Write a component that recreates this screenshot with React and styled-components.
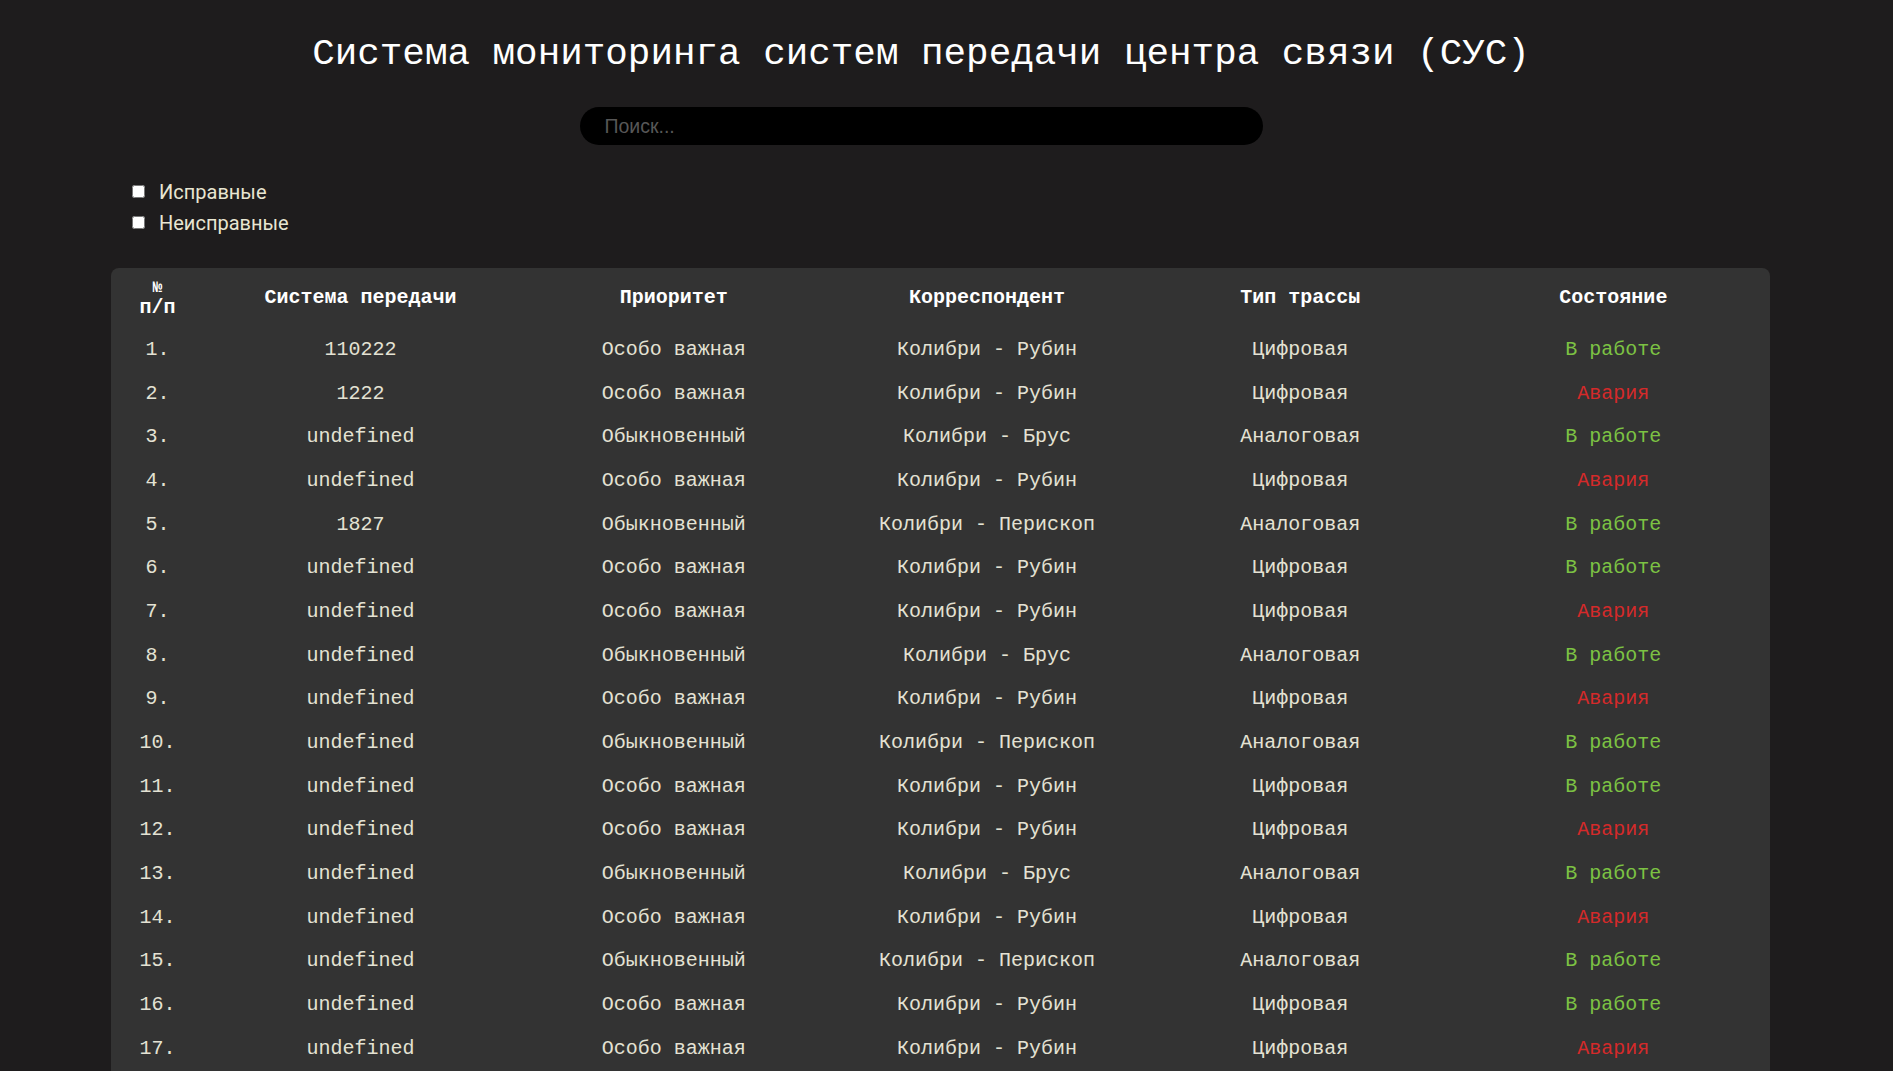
import React from 'react';
import styled, { createGlobalStyle } from 'styled-components';

const GlobalStyle = createGlobalStyle`
html, body {
  margin: 0;
  padding: 0;
  height: 100%;
  overflow: hidden;
  background: #1e1c1d;
}
`;

const Page = styled.div`
min-height: 100vh;
font-family: "Liberation Mono", "DejaVu Sans Mono", monospace;
`;

const Top = styled.div`
padding: 32px 51px 0 0;
display: flex;
flex-direction: column;
align-items: center;
`;

const Title = styled.h1`
margin: 0;
font-size: 37.6px;
line-height: 44px;
font-weight: 400;
color: #fff;
white-space: nowrap;
`;

const Search = styled.input`
margin-top: 31px;
width: 683px;
height: 38px;
box-sizing: border-box;
border: none;
outline: none;
border-radius: 19px;
background: #000;
color: #ddd;
padding: 0 0 0 25px;
font-family: "Liberation Sans", Arial, sans-serif;
font-size: 19.5px;
&::placeholder {
  color: #575757;
}
`;

const Filters = styled.div`
margin-top: 31px;
padding-left: 132px;
display: flex;
flex-direction: column;
`;

const FilterRow = styled.label`
height: 31px;
display: flex;
align-items: center;
gap: 14px;
font-family: Roboto, "Noto Sans", sans-serif;
font-size: 20px;
color: #e8e6d2;
`;

const Check = styled.input`
margin: 0;
width: 13px;
height: 13px;
`;

const Panel = styled.div`
margin: 30px 0 0 111px;
width: 1659px;
padding-bottom: 12px;
background: #333;
border-radius: 8px;
overflow: hidden;
`;

const Table = styled.table`
width: 100%;
table-layout: fixed;
border-collapse: collapse;
font-size: 20px;
`;

const Head = styled.th`
width: ${p => p.$w || 'auto'};
height: 58px;
box-sizing: border-box;
padding: 9px 0 11px;
vertical-align: middle;
font-weight: 700;
line-height: 19px;
color: #fff;
text-align: center;
`;

const Small = styled.span`
font-size: 16px;
`;

const Cell = styled.td`
height: 43.7px;
padding: 0;
text-align: center;
vertical-align: middle;
line-height: 26px;
white-space: nowrap;
color: ${p => p.$color || '#e4e2d3'};
`;

const rows = [
  ['110222', 'Особо важная', 'Колибри - Рубин', 'Цифровая', true],
  ['1222', 'Особо важная', 'Колибри - Рубин', 'Цифровая', false],
  ['undefined', 'Обыкновенный', 'Колибри - Брус', 'Аналоговая', true],
  ['undefined', 'Особо важная', 'Колибри - Рубин', 'Цифровая', false],
  ['1827', 'Обыкновенный', 'Колибри - Перископ', 'Аналоговая', true],
];

const cycle = [
  ['undefined', 'Особо важная', 'Колибри - Рубин', 'Цифровая', true],
  ['undefined', 'Особо важная', 'Колибри - Рубин', 'Цифровая', false],
  ['undefined', 'Обыкновенный', 'Колибри - Брус', 'Аналоговая', true],
  ['undefined', 'Особо важная', 'Колибри - Рубин', 'Цифровая', false],
  ['undefined', 'Обыкновенный', 'Колибри - Перископ', 'Аналоговая', true],
];

for (let i = 0; i < 12; i++) rows.push(cycle[i % 5]);

export default function App() {
  return (
    <Page>
      <GlobalStyle />
      <Top>
        <Title>Система мониторинга систем передачи центра связи (СУС)</Title>
        <Search placeholder="Поиск..." />
      </Top>
      <Filters>
        <FilterRow><Check type="checkbox" />Исправные</FilterRow>
        <FilterRow><Check type="checkbox" />Неисправные</FilterRow>
      </Filters>
      <Panel>
        <Table>
          <thead>
            <tr>
              <Head $w="93px"><Small>№</Small><br />п/п</Head>
              <Head>Система передачи</Head>
              <Head>Приоритет</Head>
              <Head>Корреспондент</Head>
              <Head>Тип трассы</Head>
              <Head>Состояние</Head>
            </tr>
          </thead>
          <tbody>
            {rows.map((r, i) => (
              <tr key={i}>
                <Cell>{i + 1}.</Cell>
                <Cell>{r[0]}</Cell>
                <Cell>{r[1]}</Cell>
                <Cell>{r[2]}</Cell>
                <Cell>{r[3]}</Cell>
                <Cell $color={r[4] ? '#7cc243' : '#d42a2a'}>{r[4] ? 'В работе' : 'Авария'}</Cell>
              </tr>
            ))}
          </tbody>
        </Table>
      </Panel>
    </Page>
  );
}
